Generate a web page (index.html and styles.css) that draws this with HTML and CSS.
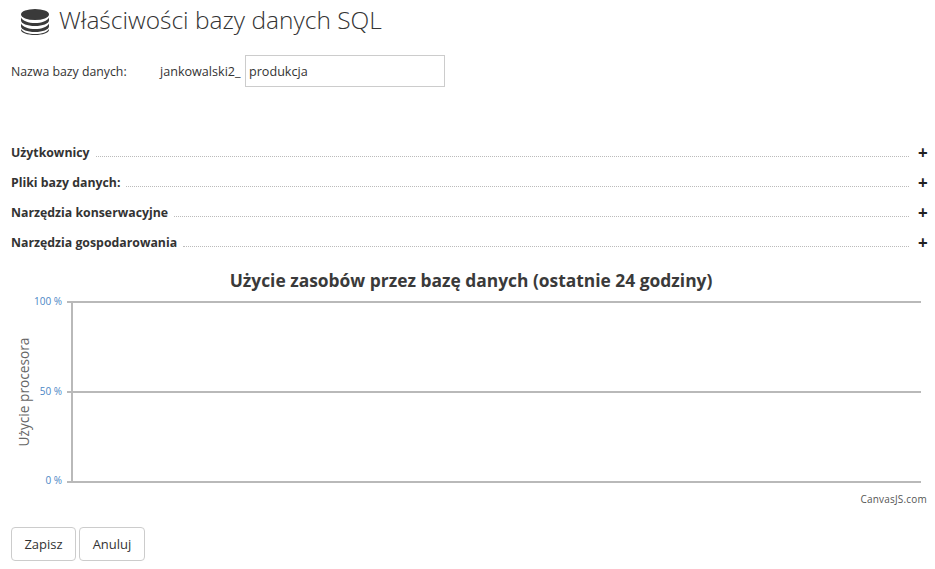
FILE: index.html
```html
<!DOCTYPE html>
<html lang="pl">
<head>
    <meta charset="UTF-8">
    <title>Właściwości bazy danych SQL</title>
    <link rel="stylesheet" href="styles.css">
</head>
<body>
    <h1 class="page-title">
        <svg class="db-icon" viewBox="0 0 28 26" width="28" height="26">
            <ellipse cx="14" cy="5.500" rx="14" ry="5.500" fill="#3a3a3a"/>
            <path d="M0 8.500v3c0 3 6.300 5.500 14 5.500s14-2.500 14-5.500v-3c-1.500 3.500-7.500 5.500-14 5.500s-12.500-2-14-5.500z" fill="#3a3a3a"/>
            <path d="M0 14.500v3c0 3 6.300 5.500 14 5.500s14-2.500 14-5.500v-3c-1.500 3.500-7.500 5.500-14 5.500s-12.500-2-14-5.500z" fill="#3a3a3a"/>
            <path d="M0 20v1c0 2.800 6.300 5 14 5s14-2.200 14-5v-1c-1.500 3-7.500 5-14 5s-12.500-2-14-5z" fill="#3a3a3a"/>
        </svg>
        Właściwości bazy danych SQL
    </h1>

    <div class="name-row">
        <label class="name-label" for="dbname">Nazwa bazy danych:</label>
        <span class="name-prefix">jankowalski2_</span>
        <input class="name-input" id="dbname" type="text" value="produkcja">
    </div>

    <div class="sections">
        <div class="section-row">
            <strong>Użytkownicy</strong>
            <span class="dots"></span>
            <span class="plus">+</span>
        </div>
        <div class="section-row">
            <strong>Pliki bazy danych:</strong>
            <span class="dots"></span>
            <span class="plus">+</span>
        </div>
        <div class="section-row">
            <strong>Narzędzia konserwacyjne</strong>
            <span class="dots"></span>
            <span class="plus">+</span>
        </div>
        <div class="section-row">
            <strong>Narzędzia gospodarowania</strong>
            <span class="dots"></span>
            <span class="plus">+</span>
        </div>
    </div>

    <h2 class="chart-title">Użycie zasobów przez bazę danych (ostatnie 24 godziny)</h2>
    <svg class="chart" viewBox="0 0 935 220" width="935" height="220">
        <g stroke="#b9b9b9" stroke-width="2">
            <line x1="67" y1="10" x2="921" y2="10"/>
            <line x1="67" y1="100" x2="921" y2="100"/>
            <line x1="67" y1="190" x2="921" y2="190"/>
            <line x1="72" y1="10" x2="72" y2="190"/>
        </g>
        <g class="tick" text-anchor="end">
            <text x="62" y="13">100 %</text>
            <text x="62" y="103">50 %</text>
            <text x="62" y="192">0 %</text>
        </g>
        <text class="axis-title" transform="translate(29 100) rotate(-90)" text-anchor="middle">Użycie procesora</text>
        <text class="credit" x="927" y="211" text-anchor="end">CanvasJS.com</text>
    </svg>

    <div class="buttons">
        <button class="btn">Zapisz</button>
        <button class="btn">Anuluj</button>
    </div>
</body>
</html>
```

FILE: styles.css
```css
body {
    margin: 0;
    font-family: "Open Sans", "Noto Sans", Arial, sans-serif;
    font-size: 13px;
    color: #333;
    background: white;
}

.page-title {
    display: flex;
    align-items: center;
    gap: 10px;
    box-sizing: border-box;
    margin: 0;
    padding: 0 0 4px 21px;
    height: 42px;
    font-size: 24.5px;
    font-weight: 300;
    color: #333;
}

.db-icon {
    flex: none;
    margin-top: 6px;
}

.name-row {
    display: flex;
    align-items: center;
    margin: 13px 0 0 11px;
    height: 32px;
}

.name-label {
    width: 149px;
    font-size: 12.3px;
}

.name-prefix {
    width: 85px;
    font-size: 12.6px;
}

.name-input {
    width: 200px;
    height: 32px;
    box-sizing: border-box;
    padding: 0 3px;
    border: 1px solid #ccc;
    font-family: inherit;
    font-size: 12.6px;
    color: #333;
}

.sections {
    margin: 50px 8px 0 11px;
}

.section-row {
    display: flex;
    align-items: center;
    height: 30px;
    font-size: 12.3px;
}

.section-row strong {
    color: #333;
    font-weight: 700;
}

.dots {
    flex: 1;
    margin: 8px 9px 0 6px;
    border-bottom: 1px dotted #bbb;
}

.plus {
    width: 9px;
    font-size: 17px;
    font-weight: 700;
    line-height: 1;
    color: #222;
}

.chart-title {
    margin: 11px 0 0 7px;
    height: 24px;
    text-align: center;
    font-size: 17.4px;
    line-height: 25px;
    font-weight: 700;
    color: #3a3a3a;
}

.chart {
    display: block;
}

.tick {
    font-size: 10px;
    fill: #4a86c5;
}

.axis-title {
    font-size: 13.7px;
    fill: #666;
}

.credit {
    font-size: 10px;
    letter-spacing: 0.2px;
    fill: #555;
}

.buttons {
    display: flex;
    gap: 3px;
    margin: 15px 0 0 11px;
}

.btn {
    height: 34px;
    width: 65px;
    padding: 0;
    border: 1px solid #ccc;
    border-radius: 4px;
    background: white;
    font-family: inherit;
    font-size: 13px;
    color: #333;
}

.btn + .btn {
    width: 66px;
}
```
